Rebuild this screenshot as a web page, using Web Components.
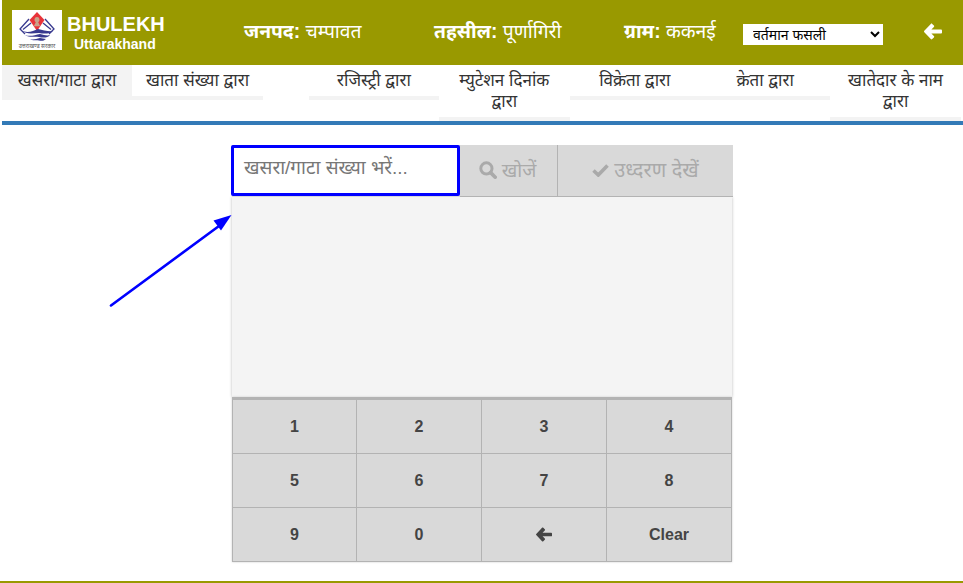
<!DOCTYPE html>
<html lang="hi"><head><meta charset="utf-8"><title>Bhulekh</title>
<style>
html,body{margin:0;padding:0;background:#fff}
body{font-family:"Liberation Sans","Noto Sans",sans-serif;color:#333;width:963px;height:583px;overflow:hidden;position:relative}
</style></head><body>
<bl-app></bl-app>
<script>
const ARROW='<svg viewBox="0 0 18 16" width="W" height="H" fill="currentColor" aria-hidden="true"><path d="M8.2.4 9.9 2c.4.4.4 1 0 1.400L7.400 5.900H16.800c.7 0 1.200.5 1.200 1.100v2c0 .6-.5 1.100-1.200 1.100H7.400l2.500 2.500c.4.400.4 1 0 1.400l-1.700 1.600c-.4.400-1 .4-1.400 0L.3 8.700c-.4-.4-.4-1 0-1.400L6.800.4c.4-.4 1-.4 1.400 0z"/></svg>';
const arrow=(w,h)=>ARROW.replace('"W"','"'+w+'"').replace('"H"','"'+h+'"');
class Base extends HTMLElement{
  constructor(){super();this.attachShadow({mode:'open'}).innerHTML=this.constructor.html;}
}
class BlLogo extends Base{static html=`<style>:host{display:block;width:50px;height:40px;background:#fff;flex:none}svg{display:block}</style>
<svg width="50" height="40" viewBox="0 0 50 40">
<path d="M25 2 32.500 10 25 21 17.500 10Z" fill="#e8333a"/>
<path d="M25 7c1.700 0 2.500 1.200 2.500 2.700 0 1.200-.6 2-1.300 2.500l2 4h-6.400l2-4c-.7-.5-1.300-1.300-1.300-2.500C22.500 8.200 23.300 7 25 7z" fill="#c9a28a"/>
<path d="M17 9 8 19l5 5M33 9l9 10-5 5" fill="none" stroke="#38398f" stroke-width="1.300"/>
<path d="M19 13 11 19.500M31 13l8 6.500" fill="none" stroke="#38398f" stroke-width="1.300"/>
<path d="M9 20c6 4 12 1 17-1 5 1 11 3 15 2-3 3-9 3-14 2-6 0-12 2-18-3zM13 25c5 2 10 0 15-1 4 1 7 2 10 1-2 3-7 3-11 2-5-1-9 1-14-2zM18 29c3 1 6 0 10-1 2 0 4 1 6 1-2 2-5 2-7 1.500-3-.5-6 .5-9-1.500z" fill="#38398f"/>
<text x="25" y="38" font-size="5.600" text-anchor="middle" fill="#555" font-family="'Noto Sans',sans-serif">उत्तराखण्ड सरकार</text>
</svg>`}
class BlHeader extends Base{static html=`<style>
:host{display:flex;align-items:flex-start;height:65px;background:#999900;color:#fff;margin-left:2px}
.brand{display:flex;margin:10px 0 0 10px;width:232px;flex:none}
.names{margin-left:5px;font-weight:700;font-family:"Liberation Sans",sans-serif}
.b{font-size:20px;line-height:20px;margin-top:4px}
.u{font-size:14px;line-height:15px;margin:3px 0 0 7px}
.f{width:190px;flex:none;font-size:19.300px;line-height:26px;margin-top:19px;white-space:nowrap;font-family:"Liberation Sans","Noto Sans",sans-serif}
.f b{font-weight:700}
select{width:140px;height:21px;margin:24px 0 0 -71px;flex:none;border:0;background:#fff;color:#000;font:14px "Liberation Sans","Noto Sans",sans-serif;padding:0 0 0 6px}
.back{margin:23px 0 0 41px;line-height:0;color:#fff}
</style>
<div class="brand"><bl-logo></bl-logo><div class="names"><div class="b">BHULEKH</div><div class="u">Uttarakhand</div></div></div>
<div class="f"><b>जनपद:</b> चम्पावत</div><div class="f"><b>तहसील:</b> पूर्णागिरी</div><div class="f"><b>ग्राम:</b> ककनई</div>
<select><option>वर्तमान फसली</option></select>
<div class="back">${arrow(18,17)}</div>`}
class BlTab extends Base{static html=`<style>
:host{display:block;width:130.4px;flex:none;text-align:center;font-size:17px;line-height:21px;color:#333;border-bottom:4px solid #f3f3f3}
:host([active]){background:#f3f3f3}
.t{padding:5px 10px}
</style><div class="t"><slot></slot></div>`}
class BlTabs extends Base{static html=`<style>
:host{display:flex;align-items:flex-start;margin-left:2px;height:56px;border-bottom:4px solid #337ab7;box-sizing:content-box}
.gap{width:46px;flex:none}
</style>
<bl-tab active>खसरा/गाटा द्वारा</bl-tab><bl-tab>खाता संख्या द्वारा</bl-tab><div class="gap"></div>
<bl-tab>रजिस्ट्री द्वारा</bl-tab><bl-tab>म्युटेशन दिनांक द्वारा</bl-tab><bl-tab>विक्रेता द्वारा</bl-tab><bl-tab>क्रेता द्वारा</bl-tab><bl-tab>खातेदार के नाम द्वारा</bl-tab>`}
class BlKey extends Base{static html=`<style>
:host{display:flex;align-items:center;justify-content:center;background:#d9d9d9;color:#444;font:700 16px "Liberation Sans",sans-serif;border-right:1px solid #b3b3b3;border-bottom:1px solid #b3b3b3;min-width:0}
</style><slot></slot>`}
class BlPad extends Base{static html=`<style>
:host{display:grid;grid-template-columns:124px 125px 125px 1fr;grid-template-rows:repeat(3,54px);border-left:1px solid #b3b3b3;border-top:3px solid #b3b3b3;width:500px;box-sizing:border-box;box-shadow:0 0 2px #ccc}
svg{display:block}
</style>
<bl-key>1</bl-key><bl-key>2</bl-key><bl-key>3</bl-key><bl-key>4</bl-key>
<bl-key>5</bl-key><bl-key>6</bl-key><bl-key>7</bl-key><bl-key>8</bl-key>
<bl-key>9</bl-key><bl-key>0</bl-key><bl-key>${arrow(16,15)}</bl-key><bl-key>Clear</bl-key>`}
class BlSearch extends Base{static html=`<style>
:host{display:flex;width:501px;height:52px;background:#d9d9d9;box-sizing:border-box;color:#aaa;font-size:19px;position:relative}
.in{width:229px;height:51px;margin-left:-1px;box-sizing:border-box;border:3px solid #0000ff;border-radius:2px;background:#fff;color:#777;padding:0 0 8px 10px;display:flex;align-items:center;flex:none;font-size:19px}
.btn{display:flex;align-items:center;justify-content:center;gap:5px;height:51px;padding-bottom:2px;box-sizing:border-box}
.s{width:98px;border-right:1px solid #b3b3b3;padding-right:2px}
.o{flex:1;font-size:20px}
.line{position:absolute;left:228px;right:0;bottom:0;height:1px;background:#b3b3b3}
</style>
<div class="in">खसरा/गाटा संख्या भरें...</div>
<div class="btn s"><svg width="18" height="18" viewBox="0 0 17 17"><circle cx="7" cy="7" r="5.300" fill="none" stroke="currentColor" stroke-width="2.800"/><path d="M11 11l4.300 4.300" stroke="currentColor" stroke-width="3.400" stroke-linecap="round"/></svg><span>खोजें</span></div>
<div class="btn o"><svg width="17" height="14" viewBox="0 0 17 14"><path d="M1.500 7.500 6.300 12 15.500 2.500" fill="none" stroke="currentColor" stroke-width="3.600"/></svg><span>उध्दरण देखें</span></div>
<div class="line"></div>`}
class BlPanel extends Base{static html=`<style>:host{display:block;width:500px;height:200px;background:#f4f4f4;box-shadow:0 0 3px #bbb}</style>`}
class BlApp extends Base{static html=`<style>
:host{display:block;height:583px;position:relative;box-sizing:border-box;border-bottom:2px solid #999900}
main{display:flex;flex-direction:column;width:501px;margin:20px 0 0 232px}
.arr{position:absolute;left:105px;top:208px}
</style>
<bl-header></bl-header><bl-tabs></bl-tabs>
<main><bl-search></bl-search><bl-panel></bl-panel><bl-pad></bl-pad></main>
<svg class="arr" width="130" height="104" viewBox="105 208 130 104"><path d="M111 305.500 219 226" stroke="#0000ff" stroke-width="2.600" stroke-linecap="round"/><path d="M231.500 215 213.500 220.500 221 230.500Z" fill="#0000ff"/></svg>`}
customElements.define('bl-logo',BlLogo);customElements.define('bl-header',BlHeader);customElements.define('bl-tab',BlTab);customElements.define('bl-tabs',BlTabs);customElements.define('bl-key',BlKey);customElements.define('bl-pad',BlPad);customElements.define('bl-search',BlSearch);customElements.define('bl-panel',BlPanel);customElements.define('bl-app',BlApp);
</script>
</body></html>
